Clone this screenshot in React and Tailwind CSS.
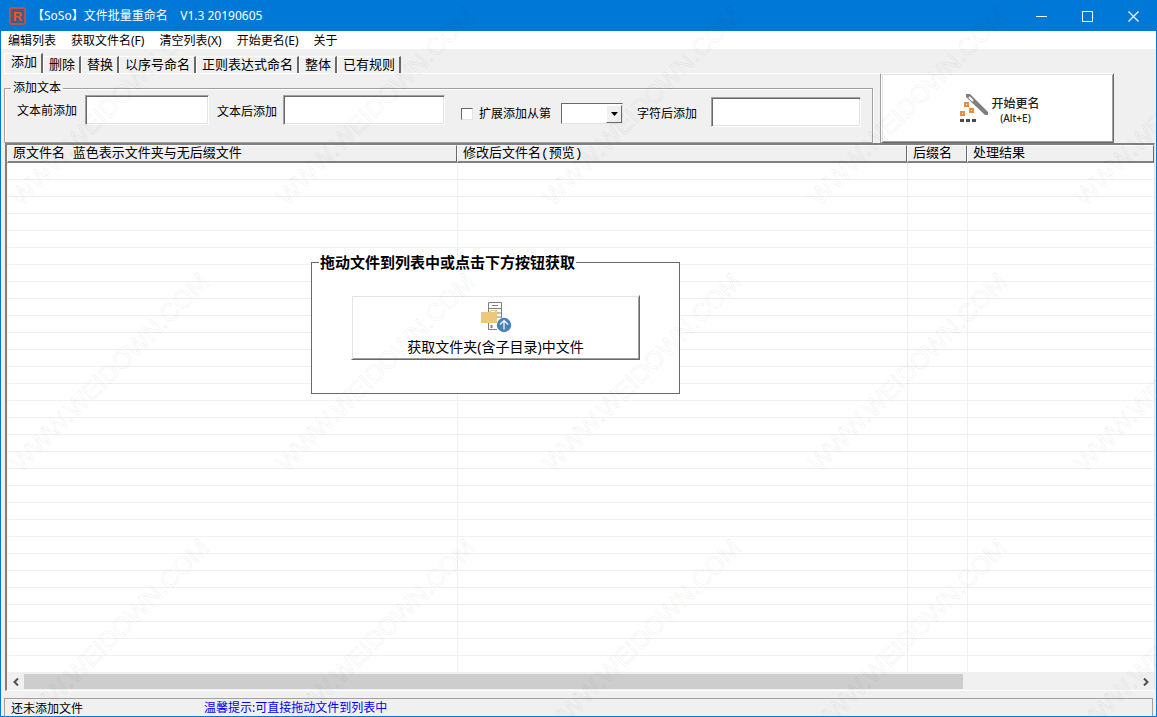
import { useState } from "react";

const menuItems = ["编辑列表", "获取文件名(F)", "清空列表(X)", "开始更名(E)", "关于"];

const tabs = ["添加", "删除", "替换", "以序号命名", "正则表达式命名", "整体", "已有规则"];

const columns = [
  { label: "原文件名 蓝色表示文件夹与无后缀文件", width: "w-[450px]" },
  { label: "修改后文件名(预览)", width: "w-[450px]" },
  { label: "后缀名", width: "w-[60px]" },
  { label: "处理结果", width: "" },
];

const emptyRows = Array.from({ length: 30 }, (_, i) => i);

const inputClass =
  "h-[30px] bg-white border border-t-[#a0a0a0] border-l-[#a0a0a0] border-b-white border-r-white shadow-[inset_1px_1px_0_#696969,inset_-1px_-1px_0_#e3e3e3] px-1 outline-none";

const raisedClass =
  "bg-white border border-t-white border-l-white border-r-[#696969] border-b-[#696969] shadow-[inset_1px_1px_0_#e3e3e3,inset_-1px_-1px_0_#a0a0a0]";

function AppLogo() {
  return (
    <svg width="17" height="18" viewBox="0 0 17 18" aria-hidden="true">
      <rect x="1" y="1" width="15" height="16" rx="1" fill="#3d5f86" stroke="#e2512d" strokeWidth="1.4" />
      <text x="8.5" y="14" textAnchor="middle" fontFamily="Liberation Sans, sans-serif" fontWeight="bold" fontSize="13" fill="#f0522b">
        R
      </text>
    </svg>
  );
}

function WandIcon() {
  return (
    <svg width="30" height="30" viewBox="0 0 30 30" aria-hidden="true">
      <path d="M7 1h4l18 18v3h-3L7 4z" fill="#7f7f7f" />
      <path d="M10 4l4 4" stroke="#fff" strokeWidth="2" />
      <g fill="#fff" stroke="#ea8c42" strokeWidth="2">
        <rect x="6" y="10" width="3" height="3" />
        <rect x="11" y="16" width="3" height="3" />
        <rect x="2" y="19" width="3" height="3" />
      </g>
      <path d="M1 27.5h4M7 27.5h4M13 27.5h4" stroke="#4a4a4a" strokeWidth="3" />
    </svg>
  );
}

function FolderUploadIcon() {
  return (
    <svg width="32" height="32" viewBox="0 0 32 32" aria-hidden="true">
      <path d="M8.5 29V1.5h13V17M8.5 7.5h13M16 12h5.5M17 16h4.5M12 4.5h6M8 28.5h9" fill="none" stroke="#808080" />
      <path d="M11.5 24v3" stroke="#808080" strokeWidth="2" />
      <path d="M1 11h8l2-2h6v13H1z" fill="#edc77c" />
      <path d="M11 10.5h4" stroke="#fff" />
      <circle cx="24" cy="24" r="7.2" fill="#4a82b8" />
      <path d="M24 28.5v-9M20 23.5l4-4 4 4" fill="none" stroke="#fff" strokeWidth="1.2" />
    </svg>
  );
}

function Watermark() {
  const steps = [0, 1, 2, 3, 4];
  return (
    <svg className="pointer-events-none absolute inset-0 h-full w-full" aria-hidden="true">
      {steps.slice(0, 3).map((row) =>
        steps.map((col) => (
          <text
            key={`${row}-${col}`}
            transform={`translate(${20 + col * 266} ${206 + row * 266}) rotate(-45)`}
            fontFamily="Liberation Sans, Arial, sans-serif"
            fontSize="25"
            fill="none"
            stroke="#000"
            strokeWidth="1"
            strokeOpacity="0.06"
          >
            WWW.WEIDOWN.COM
          </text>
        ))
      )}
    </svg>
  );
}

export default function App() {
  const [activeTab, setActiveTab] = useState("添加");
  const [before, setBefore] = useState("");
  const [after, setAfter] = useState("");
  const [extended, setExtended] = useState(false);
  const [position, setPosition] = useState("");
  const [extra, setExtra] = useState("");

  return (
    <div className="relative flex h-screen flex-col overflow-hidden border border-[#0078d7] bg-[#f0f0f0] font-['Noto_Sans','Noto_Sans_CJK_SC',sans-serif] text-[12px] leading-4 text-black">
      <header className="flex h-[30px] shrink-0 items-center bg-[#0078d7] pl-2 text-white">
        <AppLogo />
        <h1 className="ml-[6px] flex-1 whitespace-pre">【SoSo】文件批量重命名{"   "} V1.3 20190605</h1>
        <button type="button" aria-label="最小化" className="flex h-full w-[46px] items-center justify-center">
          <svg width="11" height="11"><path d="M0 5.5h11" stroke="#fff" /></svg>
        </button>
        <button type="button" aria-label="最大化" className="flex h-full w-[46px] items-center justify-center">
          <svg width="11" height="11"><path d="M.5.5h10v10H.5z" fill="none" stroke="#fff" /></svg>
        </button>
        <button type="button" aria-label="关闭" className="flex h-full w-[46px] items-center justify-center">
          <svg width="11" height="11"><path d="M.5.5l10 10M10.5.5l-10 10" stroke="#fff" strokeWidth="1.2" /></svg>
        </button>
      </header>

      <nav className="flex h-[18px] shrink-0 items-end gap-[15px] bg-white pl-[7px]">
        {menuItems.map((item) => (
          <button key={item} type="button" className="whitespace-nowrap">{item}</button>
        ))}
      </nav>

      <div className="flex shrink-0">
        <div className="flex flex-1 flex-col pl-[3px] pt-1">
          <div role="tablist" className="flex h-5 items-end font-['Liberation_Mono','Noto_Sans_CJK_SC',monospace] text-[13px]">
            {tabs.map((tab) => (
              <button
                key={tab}
                type="button"
                role="tab"
                aria-selected={activeTab === tab}
                onClick={() => setActiveTab(tab)}
                className={
                  activeTab === tab
                    ? "h-5 whitespace-nowrap border-t border-l border-r-2 border-t-white border-l-white border-r-[#696969] pl-[6px] pr-1 pb-[2px]"
                    : "h-[17px] whitespace-nowrap border-t border-l border-r-2 border-t-white border-l-white border-r-[#696969] pl-[5px] pr-1 pt-px"
                }
              >
                {tab}
              </button>
            ))}
          </div>
          <div className="flex-1 border-t border-r border-t-white border-r-[#a0a0a0] pt-[6px] pr-[7px]">
            <fieldset className="h-[63px] border border-[#a0a0a0] pl-3 shadow-[1px_1px_0_#fff,inset_1px_1px_0_#fff]">
              <legend className="-ml-[6px] px-[2px]">添加文本</legend>
              <div className="-mt-px flex items-start whitespace-nowrap">
                <div className="flex items-center">
                  <label htmlFor="before" className="pt-[2px]">文本前添加</label>
                  <input id="before" type="text" value={before} onChange={(e) => setBefore(e.target.value)} className={`${inputClass} ml-2 w-[124px]`} />
                  <label htmlFor="after" className="ml-2 pt-1">文本后添加</label>
                  <input id="after" type="text" value={after} onChange={(e) => setAfter(e.target.value)} className={`${inputClass} ml-[6px] w-[162px]`} />
                </div>
                <div className="mt-[2px] flex items-center">
                  <input
                    id="extended"
                    type="checkbox"
                    checked={extended}
                    onChange={(e) => setExtended(e.target.checked)}
                    className="mt-1 ml-4 size-3 appearance-none border border-t-[#696969] border-l-[#696969] border-b-[#e3e3e3] border-r-[#e3e3e3] bg-white checked:bg-[#696969]"
                  />
                  <label htmlFor="extended" className="ml-[6px] pt-1">扩展添加从第</label>
                  <div className="relative mt-[2px] ml-[10px]">
                    <select
                      aria-label="扩展添加从第"
                      value={position}
                      onChange={(e) => setPosition(e.target.value)}
                      className="block h-[21px] w-[62px] appearance-none border border-t-[#696969] border-l-[#696969] border-b-[#e3e3e3] border-r-[#e3e3e3] bg-white pl-1"
                    >
                      <option value=""></option>
                      <option value="1">1</option>
                      <option value="2">2</option>
                      <option value="3">3</option>
                    </select>
                    <span className="pointer-events-none absolute top-[2px] right-px flex h-[18px] w-4 items-center justify-center border border-t-white border-l-white border-r-[#696969] border-b-[#696969] bg-[#f0f0f0]">
                      <svg width="7" height="4"><path d="M0 0h7L3.5 4z" /></svg>
                    </span>
                  </div>
                  <label htmlFor="extra" className="ml-[14px] pt-1">字符后添加</label>
                  <input id="extra" type="text" value={extra} onChange={(e) => setExtra(e.target.value)} className={`${inputClass} ml-[14px] w-[150px]`} />
                </div>
              </div>
            </fieldset>
          </div>
        </div>
        <button type="button" className={`${raisedClass} mt-6 mr-[42px] flex w-[233px] items-center justify-center gap-[2px] pl-1`}>
          <WandIcon />
          <span className="flex flex-col items-center pt-1 text-[#222]">
            <span className="leading-4 font-medium">开始更名</span>
            <span className="text-[10px] leading-3 font-medium">(Alt+E)</span>
          </span>
        </button>
      </div>

      <main className="relative mr-px ml-1 flex min-h-0 flex-1 flex-col border-t-2 border-l-2 border-r border-b border-t-[#808080] border-l-[#808080] border-r-[#e3e3e3] border-b-white bg-white">
        <div className="min-h-0 flex-1 overflow-hidden">
          <table className="w-full table-fixed border-separate border-spacing-0">
            <thead>
              <tr>
                {columns.map((col) => (
                  <th
                    key={col.label}
                    className={`${col.width} h-[18px] overflow-hidden border-t border-l border-r border-b-2 border-t-white border-l-white border-r-[#696969] border-b-[#808080] bg-[#f0f0f0] p-0 pl-[5px] text-left font-['Liberation_Mono','Noto_Sans_CJK_SC',monospace] text-[13px] leading-[15px] font-normal whitespace-nowrap`}
                  >
                    {col.label}
                  </th>
                ))}
              </tr>
            </thead>
            <tbody>
              {emptyRows.map((row) => (
                <tr key={row}>
                  {columns.map((col) => (
                    <td key={col.label} className="h-[17px] border-b border-l border-[#f0f0f0] p-0 first:border-l-0"></td>
                  ))}
                </tr>
              ))}
            </tbody>
          </table>
        </div>

        <div className="flex h-[17px] shrink-0 items-center bg-[#f0f0f0]">
          <button type="button" aria-label="向左滚动" className="flex h-full w-[17px] items-center justify-center">
            <svg width="6" height="8"><path d="M5 .5L1.5 4 5 7.5" fill="none" stroke="#505050" strokeWidth="2" /></svg>
          </button>
          <div className="flex h-[15px] flex-1">
            <div className="flex-[27] bg-[#cdcdcd]"></div>
            <div className="flex-[5]"></div>
          </div>
          <button type="button" aria-label="向右滚动" className="flex h-full w-[17px] items-center justify-center">
            <svg width="6" height="8"><path d="M1 .5L4.5 4 1 7.5" fill="none" stroke="#505050" strokeWidth="2" /></svg>
          </button>
        </div>

        <fieldset className="absolute top-[107px] left-[304px] h-[142px] w-[369px] border border-[#696969] bg-white px-[39px]">
          <legend className="-ml-8 px-px text-[15px] leading-5 font-bold">拖动文件到列表中或点击下方按钮获取</legend>
          <button type="button" className={`${raisedClass} mt-[23px] flex h-[65px] w-full flex-col items-center pt-[5px]`}>
            <FolderUploadIcon />
            <span className="mt-1 text-[14px] leading-5">获取文件夹(含子目录)中文件</span>
          </button>
        </fieldset>
      </main>

      <footer className="mt-[7px] mr-[3px] ml-[3px] flex h-[18px] shrink-0 border-t border-l border-r border-[#a0a0a0] pl-[6px]">
        <span className="w-[193px] pt-[2px]">还未添加文件</span>
        <span className="pt-px text-[#0000ff]">温馨提示:可直接拖动文件到列表中</span>
      </footer>

      <Watermark />
    </div>
  );
}
